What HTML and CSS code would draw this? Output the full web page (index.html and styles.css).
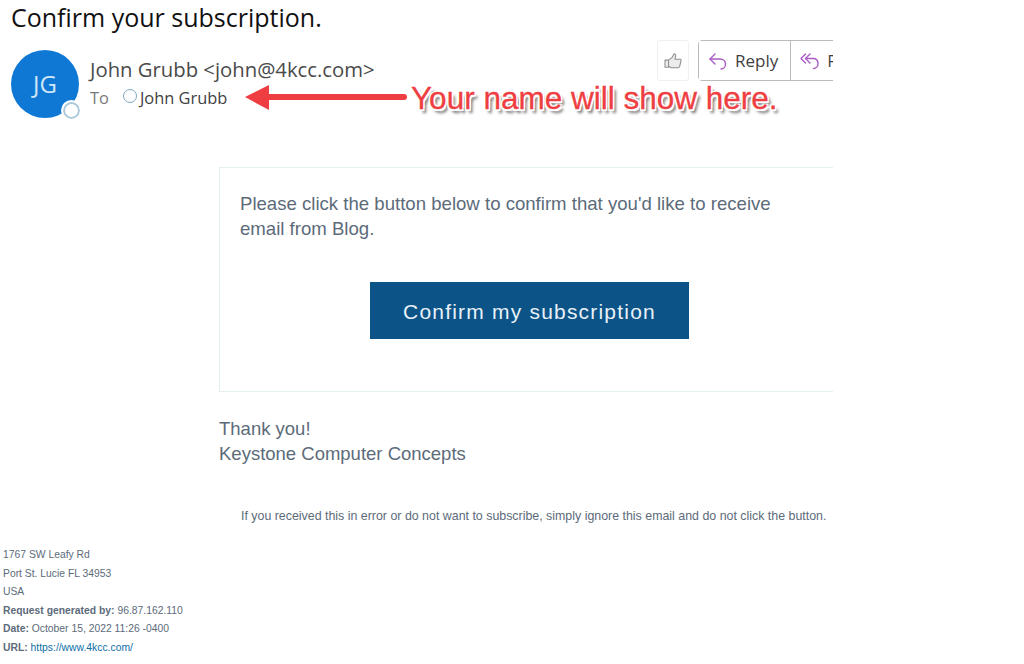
FILE: index.html
```html
<!DOCTYPE html>
<html lang="en">
<head>
  <meta charset="UTF-8">
  <title>Confirm your subscription.</title>
  <link rel="stylesheet" href="styles.css">
</head>
<body>

  <div class="mail">

    <!-- Subject and sender -->
    <h1 class="subject">Confirm your subscription.</h1>

    <div class="mail-head">
      <div class="avatar">
        JG
        <span class="status"></span>
      </div>
      <div class="sender">
        <div class="from">John Grubb &lt;john@4kcc.com&gt;</div>
        <div class="to"><span class="to-label">To</span><span class="presence"></span><span>John Grubb</span></div>
      </div>
      <div class="actions">
        <button class="like">
          <svg width="18" height="16" viewBox="0 0 20 18" fill="#ececec" stroke="#8f8f8f" stroke-width="1.2" stroke-linejoin="round">
            <path d="M1 8h4v8H1z"/>
            <path d="M5 8l4-3 2-4c1.500 0 2.300 1 2 2.500L12.300 7H18c1 0 1.300 1 1 2l-1.500 6c-.3 1-1 1.500-2 1.500H8L5 15z"/>
          </svg>
        </button>
        <div class="reply-group">
          <button class="reply">
            <svg width="20" height="20" viewBox="0 0 20 20" fill="none" stroke="#a95cc4" stroke-width="1.400" stroke-linecap="round" stroke-linejoin="round">
              <path d="M7 3L2 8l5 5"/>
              <path d="M2 8h10c3 0 5.500 2 5.500 5s-2 5-4.500 5"/>
            </svg>
            Reply
          </button>
          <button class="reply">
            <svg width="20" height="20" viewBox="0 0 20 20" fill="none" stroke="#a95cc4" stroke-width="1.400" stroke-linecap="round" stroke-linejoin="round">
              <path d="M5.500 3L1 7.500 5.500 12"/>
              <path d="M10 3L5.500 7.500 10 12"/>
              <path d="M5.500 7.500H13c3 0 5 2 5 5s-2 5-4.500 5"/>
            </svg>
            Reply all
          </button>
        </div>
      </div>
    </div>

    <!-- Message body -->
    <div class="message">
      <div class="card">
        <p class="card-text">Please click the button below to confirm that you'd like to receive<br>email from Blog.</p>
        <div class="card-action">
          <a href="#" class="confirm-btn">Confirm my subscription</a>
        </div>
      </div>
      <p class="thanks">Thank you!<br>Keystone Computer Concepts</p>
      <p class="note">If you received this in error or do not want to subscribe, simply ignore this email and do not click the button.</p>
    </div>

    <!-- Footer -->
    <div class="footer">
      <div>1767 SW Leafy Rd</div>
      <div>Port St. Lucie FL 34953</div>
      <div>USA</div>
      <div><b>Request generated by:</b> 96.87.162.110</div>
      <div><b>Date:</b> October 15, 2022 11:26 -0400</div>
      <div><b>URL:</b> <a href="#">https://www.4kcc.com/</a></div>
    </div>
  </div>

  <!-- Annotation on top of the screenshot -->
  <div class="callout">
    <svg class="callout-arrow" width="166" height="28" viewBox="0 0 166 28">
      <path d="M24 13H160" stroke="#ef3e42" stroke-width="6" stroke-linecap="round"/>
      <path d="M1 13L25 1v25z" fill="#ef3e42"/>
    </svg>
    <span class="callout-text">Your name will show here.</span>
  </div>

</body>
</html>
```

FILE: styles.css
```css
* {
  box-sizing: border-box;
  margin: 0;
  padding: 0;
}

body {
  width: 1024px;
  height: 664px;
  overflow: hidden;
  position: relative;
  background-color: #fff;
  font-family: "Liberation Sans", Arial, sans-serif;
}

.mail {
  width: 833px;
  height: 664px;
  overflow: hidden;
}

.subject {
  height: 50px;
  padding-left: 11px;
  font-family: "Open Sans", sans-serif;
  font-size: 25px;
  line-height: 34px;
  font-weight: 400;
  color: #111;
}

.mail-head {
  display: flex;
  height: 117px;
  padding-left: 11px;
  position: relative;
  font-family: "Open Sans", sans-serif;
}

.avatar {
  position: relative;
  flex: none;
  width: 68px;
  height: 68px;
  border-radius: 50%;
  background-color: #0f78d4;
  color: #cfe6f7;
  font-size: 24px;
  line-height: 68px;
  text-align: center;
}

.status {
  position: absolute;
  right: -3px;
  bottom: -3px;
  width: 21px;
  height: 21px;
  border-radius: 50%;
  background-color: #fff;
  border: 2px solid #fff;
  box-shadow: inset 0 0 0 2px #a9c8dc;
}

.sender {
  padding: 5px 0 0 11px;
  color: #4a4a4a;
}

.from {
  font-size: 20.3px;
  line-height: 28px;
  white-space: nowrap;
}

.to {
  display: flex;
  align-items: center;
  margin-top: 3px;
  font-size: 16.4px;
  line-height: 24px;
  color: #3f3f3f;
}

.to-label {
  color: #7a7a7a;
  margin-right: 14px;
}

.presence {
  width: 14px;
  height: 14px;
  margin: -5px 3px 0 0;
  border-radius: 50%;
  border: 1px solid #7fa6bf;
}

.actions {
  display: flex;
  margin-left: auto;
  gap: 9px;
  height: 41px;
  margin-top: -10px;
  margin-right: -74px;
}

button {
  font-family: inherit;
  background-color: #fff;
  cursor: pointer;
}

.like {
  width: 32px;
  border: 1px solid #f0f0f0;
  border-radius: 3px;
  display: flex;
  align-items: center;
  justify-content: center;
}

.reply-group {
  display: flex;
  border: 1px solid #bdbbb9;
  border-radius: 4px;
}

.reply {
  display: flex;
  align-items: center;
  gap: 7px;
  padding: 0 12px 0 9px;
  border: none;
  border-right: 1px solid #bdbbb9;
  font-size: 17px;
  color: #3f3f3f;
  white-space: nowrap;
}

.message {
  padding-left: 219px;
  color: #5c6b7a;
}

.card {
  width: 640px;
  height: 225px;
  padding: 23px 20px 0;
  border: 1px solid #e4f0f0;
}

.card-text {
  font-size: 18.6px;
  line-height: 25px;
}

.card-action {
  display: flex;
  padding: 41px 0 0 130px;
}

.confirm-btn {
  display: block;
  width: 319px;
  height: 57px;
  background-color: #0c5487;
  color: #e8f1f7;
  font-size: 21px;
  line-height: 59px;
  letter-spacing: 1.2px;
  text-align: center;
  text-decoration: none;
}

.thanks {
  margin-top: 24px;
  font-size: 18.5px;
  line-height: 25px;
}

.note {
  margin-top: 42px;
  padding-left: 22px;
  font-size: 12.4px;
  line-height: 16px;
  white-space: nowrap;
}

.footer {
  margin-top: 22px;
  padding-left: 3px;
  font-size: 10.35px;
  line-height: 18.5px;
  color: #5c6b7a;
}

.footer a {
  color: #0c6fa8;
  text-decoration: none;
}

/* Red note pasted over the screenshot */
.callout {
  position: absolute;
  left: 244px;
  top: 80px;
  display: flex;
  align-items: center;
  height: 36px;
}

.callout-arrow {
  flex: none;
}

.callout-text {
  margin-left: 1px;
  font-family: "Liberation Sans", Arial, sans-serif;
  font-size: 31.5px;
  line-height: 34px;
  color: #ef3e42;
  white-space: nowrap;
  -webkit-text-stroke: 0.3px #ef3e42;
  text-shadow: 0 0 1px #fff, 1.500px 1.500px 0 #fff, -1.500px -1.500px 0 #fff, 1.500px -1.500px 0 #fff, -1.500px 1.500px 0 #fff, 3px 4px 3px rgba(0, 0, 0, 0.6);
}
```
